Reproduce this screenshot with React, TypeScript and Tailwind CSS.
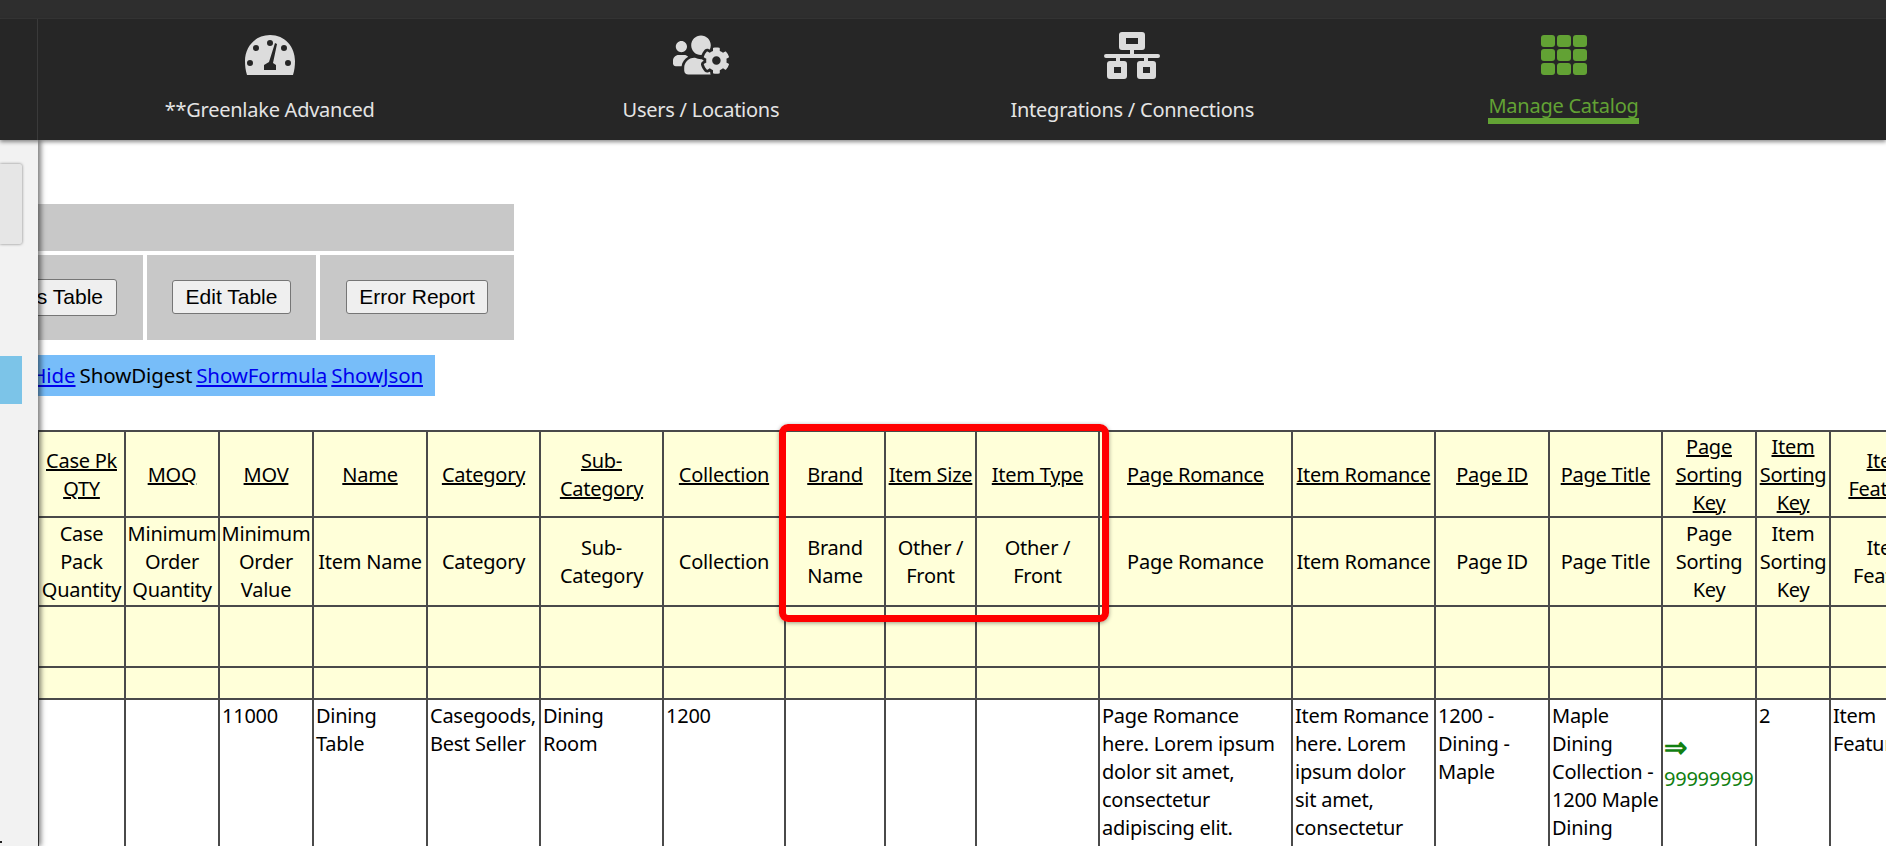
import React from "react";
import { FaUsersCog } from "react-icons/fa";

const font = "font-['Noto_Sans',sans-serif]";

function Gauge() {
  return (
    <svg width="52" height="40" viewBox="0 0 52 40">
      <path
        fillRule="evenodd"
        fill="#dcdcdc"
        d="M26 0C11 0 1 12 1 26c0 5 .5 9 2 14h46c1.500-5 2-9 2-14C51 12 41 0 26 0ZM26 5a3 3 0 1 1 0 6 3 3 0 0 1 0-6ZM12 10a3 3 0 1 1 0 6 3 3 0 0 1 0-6ZM6 25a3 3 0 1 1 0 6 3 3 0 0 1 0-6ZM44 25a3 3 0 1 1 0 6 3 3 0 0 1 0-6ZM40 10a3 3 0 1 1 0 6 3 3 0 0 1 0-6ZM31 8l2 1-4 19 3 2v5H20v-5l5-3Z"
      />
    </svg>
  );
}

function Network() {
  return (
    <svg width="56" height="47" viewBox="0 0 56 47">
      <path
        fillRule="evenodd"
        fill="#dcdcdc"
        d="M18 0h20a3 3 0 0 1 3 3v12a3 3 0 0 1-3 3h-8v4h24a2 2 0 0 1 0 4H44v3h5a3 3 0 0 1 3 3v12a3 3 0 0 1-3 3H36a3 3 0 0 1-3-3V32a3 3 0 0 1 3-3h4v-3H16v3h4a3 3 0 0 1 3 3v12a3 3 0 0 1-3 3H6a3 3 0 0 1-3-3V32a3 3 0 0 1 3-3h6v-3H2a2 2 0 0 1 0-4h24v-4h-8a3 3 0 0 1-3-3V3a3 3 0 0 1 3-3ZM22 6v6h12V6ZM10 35v6h7v-6ZM39 35v6h7v-6Z"
      />
    </svg>
  );
}

function Apps() {
  const cells = [0, 1, 2, 3, 4, 5, 6, 7, 8];
  return (
    <svg width="46" height="40" viewBox="0 0 46 40">
      {cells.map((i) => (
        <rect
          key={i}
          x={(i % 3) * 16}
          y={Math.floor(i / 3) * 14}
          width="14"
          height="12"
          rx="3"
          fill="#62a234"
        />
      ))}
    </svg>
  );
}

function NavItem({ icon, label, active }: { icon: React.ReactNode; label: string; active?: boolean }) {
  return (
    <div className="w-[431.300px] flex flex-col items-center shrink-0">
      <div className="h-[46px] mt-[13px] flex items-center justify-center">{icon}</div>
      {active ? (
        <span className="mt-[15px] text-[20px] leading-[25px] tracking-[-0.25px] text-[#62a234] border-b-[6px] border-[#62a234]">{label}</span>
      ) : (
        <span className="mt-[20px] text-[20px] leading-[24px] tracking-[-0.25px] text-[#e4e4e4]">{label}</span>
      )}
    </div>
  );
}

const cols = [87, 94, 94, 114, 113, 123, 122, 100, 91, 123, 193, 143, 114, 113, 94, 74, 116];

const h1: React.ReactNode[] = ["Case Pk QTY", "MOQ", "MOV", "Name", "Category", "Sub-Category", "Collection", "Brand", "Item Size", "Item Type", "Page Romance", "Item Romance", "Page ID", "Page Title", "Page Sorting Key", "Item Sorting Key", <>Item<br />Features</>];
const h2: React.ReactNode[] = ["Case Pack Quantity", "Minimum Order Quantity", "Minimum Order Value", "Item Name", "Category", "Sub-Category", "Collection", "Brand Name", <>Other /<br />Front</>, <>Other /<br />Front</>, "Page Romance", "Item Romance", "Page ID", "Page Title", "Page Sorting Key", "Item Sorting Key", <>Item<br />Feature</>];

const body: React.ReactNode[] = [
  "",
  "",
  "11000",
  "Dining Table",
  "Casegoods, Best Seller",
  "Dining Room",
  "1200",
  "",
  "",
  "",
  "Page Romance here. Lorem ipsum dolor sit amet, consectetur adipiscing elit.",
  "Item Romance here. Lorem ipsum dolor sit amet, consectetur adipiscing elit.",
  "1200 - Dining - Maple",
  <>Maple Dining Collection - <span className="whitespace-nowrap">1200 Maple</span> Dining Collection</>,
  null,
  "2",
  <>Item<br />Features</>,
];

const cell = "border-2 border-[#4a4a4a] p-0 overflow-hidden";

export default function App() {
  return (
    <div className={`${font} h-[846px] w-[1886px] overflow-hidden bg-white text-black relative`}>
      <div className="h-[19px] bg-[#2e2e2e] border-b border-[#363636]" />
      <div className="h-[121px] bg-[#262626] flex relative z-20 shadow-[0_2px_4px_rgba(0,0,0,0.45)]">
        <div className="w-[38px] shrink-0 border-r border-[#3a3a3a]" />
        <div className="flex pl-[16px]">
          <NavItem icon={<Gauge />} label="**Greenlake Advanced" />
          <NavItem icon={<FaUsersCog size={56} color="#dcdcdc" />} label="Users / Locations" />
          <NavItem icon={<Network />} label="Integrations / Connections" />
          <NavItem icon={<Apps />} label="Manage Catalog" active />
        </div>
      </div>

      <div className="flex h-[706px]">
        <div className="w-[38px] shrink-0 bg-[#f2f2f2] relative z-10 shadow-[3px_0_5px_rgba(0,0,0,0.5)] pt-[24px]">
          <div className="w-[22px] h-[80px] bg-[#e6e6e6] rounded-r-[2px] shadow-[0_0_3px_rgba(0,0,0,0.5)]" />
          <div className="w-[22px] h-[48px] mt-[112px] bg-[#7cc4e8]" />
          <span className="absolute left-0 bottom-[3px] w-[2px] h-[2px] bg-[#222]" />
        </div>

        <div className="flex-1 min-w-0 overflow-hidden pt-[64px]">
          <div className="w-[476px] h-[47px] bg-[#c8c8c8]" />
          <div className="flex mt-[4px] h-[85px] w-[476px] gap-[4px]">
            <div className="w-[105px] bg-[#c8c8c8] flex items-center overflow-hidden justify-end pr-[26px] pb-[1px]">
              <button className="shrink-0 h-[37px] px-[13px] bg-[#efefef] border border-[#767676] rounded-[3px] text-[21px] font-['Liberation_Sans',sans-serif] whitespace-nowrap">Items Table</button>
            </div>
            <div className="w-[169px] bg-[#c8c8c8] flex items-center justify-center pb-[1px]">
              <button className="h-[34px] w-[119px] bg-[#efefef] border border-[#767676] rounded-[3px] text-[21px] font-['Liberation_Sans',sans-serif] pb-[2px]">Edit Table</button>
            </div>
            <div className="flex-1 bg-[#c8c8c8] flex items-center justify-center pb-[1px]">
              <button className="h-[34px] w-[142px] bg-[#efefef] border border-[#767676] rounded-[3px] text-[21px] font-['Liberation_Sans',sans-serif] pb-[2px]">Error Report</button>
            </div>
          </div>

          <div className="mt-[15px] h-[41px] w-[397px] bg-[#77bdf9] flex items-center text-[20.500px] tracking-[-0.1px] whitespace-nowrap overflow-hidden justify-end pr-[12px] gap-[4px]">
            <a className="text-[#0000ee] underline">Hide</a>
            <span>ShowDigest</span>
            <a className="text-[#0000ee] underline">ShowFormula</a>
            <a className="text-[#0000ee] underline">ShowJson</a>
          </div>

          <div className="relative mt-[34px]">
            <table className="-ml-[1px] table-fixed border-collapse text-[20px] leading-[28px] tracking-[-0.25px]" style={{ width: cols.reduce((a, b) => a + b, 0) }}>
              <colgroup>
                {cols.map((w, i) => (
                  <col key={i} style={{ width: w }} />
                ))}
              </colgroup>
              <tbody>
                <tr className="bg-[#ffffd9] h-[86px] text-center">
                  {h1.map((t, i) => (
                    <td key={i} className={cell}>
                      <span className="underline relative top-[1px]">{t}</span>
                    </td>
                  ))}
                </tr>
                <tr className="bg-[#ffffd9] h-[89px] text-center">
                  {h2.map((t, i) => (
                    <td key={i} className={cell}>{t}</td>
                  ))}
                </tr>
                <tr className="bg-[#ffffd9] h-[61px]">
                  {cols.map((_, i) => (
                    <td key={i} className={cell} />
                  ))}
                </tr>
                <tr className="bg-[#ffffd9] h-[32px]">
                  {cols.map((_, i) => (
                    <td key={i} className={cell} />
                  ))}
                </tr>
                <tr>
                  {body.map((t, i) =>
                    t === null ? (
                      <td key={i} className={`${cell} align-top px-[1px] text-[#118011]`}>
                        <div className="mt-[32px] text-[28px] leading-[28px] font-bold">⇒</div>
                        <div className="mt-[5px]">99999999</div>
                      </td>
                    ) : (
                      <td key={i} className={`${cell} align-top pl-[2px] pr-[3px] pt-[2px]`}>{t}</td>
                    )
                  )}
                </tr>
              </tbody>
            </table>
            <div className="absolute left-[741px] top-[-6px] w-[330px] h-[198px] border-[7px] border-[#ff0000] rounded-[9px] shadow-[0_1px_4px_rgba(0,0,0,0.4)] pointer-events-none" />
          </div>
        </div>
      </div>
    </div>
  );
}
